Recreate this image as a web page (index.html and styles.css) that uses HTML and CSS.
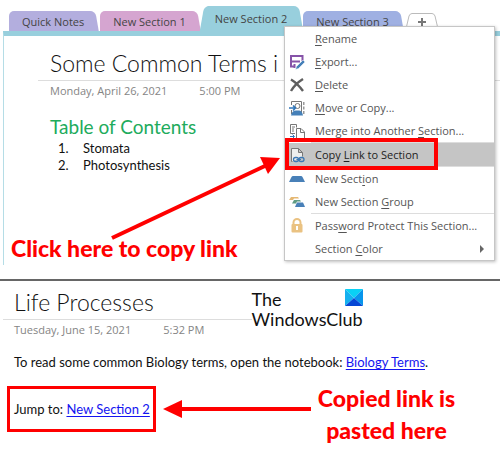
FILE: index.html
```html
<!DOCTYPE html>
<html lang="en">
<head>
    <meta charset="UTF-8">
    <meta name="viewport" content="width=device-width, initial-scale=1.0">
    <title>Copy Link to Section</title>
    <link rel="stylesheet" href="styles.css">
</head>
<body>

<section class="notebook">
    <nav class="tabs">
        <button class="tab purple">Quick Notes</button>
        <button class="tab pink">New Section 1</button>
        <button class="tab active">New Section 2</button>
        <button class="tab blue">New Section 3</button>
        <button class="add" aria-label="Add section">
            <svg width="34" height="18" viewBox="0 0 34 18">
                <path d="M.5 18L4 3Q5 .5 7 .5h20q2 0 3 2.500L33.500 18" fill="#fff" stroke="#bbb"/>
                <path d="M17 5v8M13 9h8" stroke="#777" stroke-width="2"/>
            </svg>
        </button>
    </nav>

    <article class="page">
        <h1 class="page-title">Some Common Terms i</h1>
        <p class="date"><span>Monday, April 26, 2021</span><span>5:00 PM</span></p>
        <h2 class="toc-title">Table of Contents</h2>
        <ol class="toc">
            <li>Stomata</li>
            <li>Photosynthesis</li>
        </ol>
        <p class="note click-note">Click here to copy link</p>
    </article>

    <svg class="arrow-up" width="170" height="84" viewBox="0 0 170 84">
        <path d="M1 81L156 8" stroke="#f00" stroke-width="4"/>
        <path d="M169 1L149 0L157 17Z" fill="#f00"/>
    </svg>

    <div class="menu">
        <button class="item"><span class="icon"></span><span><u>R</u>ename</span></button>
        <button class="item">
            <svg class="icon" viewBox="0 0 16 16">
                <path d="M2 2h11.500v5M2 1v11.500h4M2 7.500h9M5.500 10v4" fill="none" stroke="#8653a8" stroke-width="2"/>
                <path d="M14 6l2 2-6.500 6.500-3 1 1-3z" fill="#4580b8" stroke="#fff" stroke-width=".5"/>
            </svg>
            <span><u>E</u>xport...</span>
        </button>
        <button class="item">
            <svg class="icon" viewBox="0 0 16 16"><path d="M2 2.500Q8 6 14 14M14 2Q6 7 2 14" fill="none" stroke="#5f5f5f" stroke-width="2.400"/></svg>
            <span><u>D</u>elete</span>
        </button>
        <button class="item">
            <svg class="icon" viewBox="0 0 16 16">
                <path d="M2.500 5V1.500h10v13M2.500 10v4" fill="none" stroke="#777"/>
                <path d="M14 2h1.500v3H14zM14 6.500h1.500v3H14zM14 11h1.500v3H14z" fill="#999"/>
                <circle cx="8.500" cy="6" r="2.500" fill="#fff" stroke="#777"/>
                <path d="M2 15.500q1-5 5-5h3q3 0 4 5z" fill="#4580b8"/>
                <path d="M0 8h6M4 5.500L6.500 8L4 10.500" fill="none" stroke="#2f76ba" stroke-width="1.500"/>
            </svg>
            <span><u>M</u>ove or Copy...</span>
        </button>
        <button class="item">
            <svg class="icon" viewBox="0 0 16 16">
                <path d="M6 10.500H1.500v-9h6v3M3 4h3M3 6h2M3 8h2" fill="none" stroke="#777"/>
                <path d="M7.500 5.500h4.500l3.500 3.500v6.500h-8zM11.500 5.500v4h4" fill="#fff" stroke="#777"/>
                <path d="M1 13.500h4M3.500 11.500l2 2-2 2" fill="none" stroke="#2f76ba"/>
            </svg>
            <span>Merge into Another <u>S</u>ection...</span>
        </button>
        <hr>
        <button class="item selected">
            <svg class="icon" viewBox="0 0 16 16">
                <path d="M3.500 14.500h-1v-13h7l4 4v4M9.500 1.500v4h4" fill="#eee" stroke="#777"/>
                <rect x="4.500" y="10.500" width="5" height="4" rx="2" fill="none" stroke="#3c78b4" stroke-width="1.300"/>
                <rect x="10" y="10.500" width="5" height="4" rx="2" fill="none" stroke="#3c78b4" stroke-width="1.300"/>
                <path d="M7.500 12.500h4.500" stroke="#3c78b4"/>
            </svg>
            <span>Copy <u>L</u>ink to Section</span>
        </button>
        <hr>
        <button class="item">
            <svg class="icon" viewBox="0 0 16 16"><path d="M0 11l2.500-5q.5-1 1.500-1h8q1 0 1.500 1L16 11z" fill="#4880b8"/></svg>
            <span>New Sect<u>i</u>on</span>
        </button>
        <button class="item">
            <svg class="icon" viewBox="0 0 16 16">
                <path d="M0 6l2-3h7l1 1.500H5L4 6z" fill="#e5b873"/>
                <path d="M3 9.500l2-3.500h6l1 1.500H8l-1 2z" fill="#5f9c83"/>
                <path d="M6 13l2-4.500h6L16 13z" fill="#4880b8"/>
            </svg>
            <span>New Section <u>G</u>roup</span>
        </button>
        <hr>
        <button class="item">
            <svg class="icon" viewBox="0 0 16 16">
                <path d="M4.500 7V4.500a3.500 3.500 0 0 1 7 0V7" fill="none" stroke="#eac282" stroke-width="2"/>
                <rect x="2.500" y="6" width="11" height="8.500" rx="1" fill="#eac282"/>
                <path d="M8 8v4" stroke="#fff" stroke-width="2"/>
            </svg>
            <span>Pass<u>w</u>ord Protect This Section...</span>
        </button>
        <button class="item">
            <span class="icon"></span><span>Section <u>C</u>olor</span>
            <svg class="more" width="4" height="8" viewBox="0 0 4 8"><path d="M0 0l4 4-4 4z" fill="#666"/></svg>
        </button>
    </div>
</section>

<section class="result">
    <header class="result-head">
        <h1 class="page-title">Life Processes</h1>
        <p class="date"><span>Tuesday, June 15, 2021</span><span>5:32 PM</span></p>
        <div class="logo">
            <span>The</span>
            <svg width="18" height="17" viewBox="0 0 18 17">
                <path d="M0 0h18L9 9z" fill="#09d1f5"/>
                <path d="M0 0l9 9-9 8z" fill="#15b0ef"/>
                <path d="M18 0v17L9 9z" fill="#0795ec"/>
                <path d="M0 17l9-8 9 8z" fill="#0647d5"/>
            </svg>
            <span>WindowsClub</span>
        </div>
    </header>
    <p class="text">To read some common Biology terms, open the notebook: <a href="#">Biology Terms</a>.</p>
    <div class="jump-row">
        <p class="jump">Jump to: <a href="#">New Section 2</a></p>
        <svg class="arrow-left" width="148" height="20" viewBox="0 0 148 20">
            <path d="M16 10h132" stroke="#f00" stroke-width="4"/>
            <path d="M0 10L19 1v18z" fill="#f00"/>
        </svg>
        <p class="note">Copied link is<br>pasted here</p>
    </div>
</section>

</body>
</html>
```

FILE: styles.css
```css
* {
    box-sizing: border-box;
}

body {
    margin: 0;
    background: #fff;
    color: #111;
    font-family: Lato, Carlito, sans-serif;
    font-size: 13px;
}

h1, h2, p, ol {
    margin: 0;
}

button {
    border: 0;
    padding: 0;
    background: none;
    font-family: "Open Sans", "Noto Sans", sans-serif;
    font-size: 11px;
    color: #444;
}

a {
    color: #1414f0;
    text-underline-offset: 2px;
}

/* notebook with section tabs */
.notebook {
    position: relative;
    padding: 6px 0 0 3px;
}

.tabs {
    display: flex;
    align-items: flex-end;
    gap: 5px;
    height: 25px;
    padding-left: 6px;
}

.tab {
    position: relative;
    z-index: 0;
    height: 20px;
    padding: 0 11px 0 13px;
    white-space: nowrap;
}

.tab::before,
.tab::after {
    content: "";
    position: absolute;
    z-index: -1;
    top: 0;
    bottom: 0;
    background: var(--tab);
}

.tab::before {
    left: 0;
    right: 8px;
    border-radius: 5px 0 0 0;
}

.tab::after {
    left: 8px;
    right: -2px;
    border-radius: 0 5px 0 0;
    transform: skewX(10deg);
}

.purple { --tab: #b3aede; }
.pink { --tab: #d5a5d0; }
.blue { --tab: #9fb0e2; }

.active {
    --tab: #98cfdd;
    z-index: 1;
    height: 25px;
}

.active::before {
    transform: skewX(-10deg);
}

.add svg {
    display: block;
}

.page {
    min-height: 234px;
    padding: 11px 0 0 46px;
    border-top: 5px solid #98cfdd;
    border-left: 1px solid #b5dde6;
}

.page-title {
    padding-bottom: 1px;
    border-bottom: 1px solid #ddd;
    font-size: 23px;
    line-height: 32px;
    font-weight: 300;
}

.page .page-title {
    margin-left: -12px;
    padding-left: 12px;
}

.date {
    display: flex;
    gap: 32px;
    font-family: "Open Sans", "Noto Sans", sans-serif;
    font-size: 11px;
    line-height: 20px;
    color: #858585;
}

.toc-title {
    margin-top: 14px;
    font-size: 19px;
    line-height: 24px;
    font-weight: 400;
    color: #21ab5c;
}

.toc {
    margin-top: 1px;
    padding-left: 22px;
    line-height: 17px;
}

.toc li {
    padding-left: 11px;
}

.note {
    font-size: 23px;
    line-height: 32px;
    font-weight: 900;
    color: #f00;
}

.click-note {
    margin: 58px 0 0 -39px;
}

.arrow-up {
    position: absolute;
    left: 111px;
    top: 157px;
    z-index: 3;
}

/* context menu */
.menu {
    position: absolute;
    top: 26px;
    right: 5px;
    z-index: 2;
    width: 211px;
    border: 1px solid #c6c6c6;
    background: #fff;
    box-shadow: 1px 1px 3px rgba(0, 0, 0, .25);
}

.menu hr {
    margin: 0 0 0 26px;
    border: 0;
    border-top: 1px solid #ddd;
}

.item {
    position: relative;
    display: flex;
    align-items: center;
    gap: 10px;
    width: 100%;
    height: 23px;
    padding: 0 10px 0 4px;
    color: #555;
    white-space: nowrap;
}

.item u {
    text-underline-offset: 2px;
}

.icon {
    width: 16px;
    height: 16px;
    flex: none;
}

.more {
    margin-left: auto;
}

.selected {
    background: #c5c5c5;
    color: #222;
}

.selected::after {
    content: "";
    position: absolute;
    inset: -5px 56px -4px 0;
    border: 4px solid #f00;
}

/* page with the pasted link */
.result {
    margin-top: 14px;
    border-top: 2px solid #666;
}

.result-head {
    position: relative;
    margin-left: 3px;
}

.result-head .page-title {
    width: 50%;
    padding-top: 5px;
    padding-left: 11px;
}

.result-head .date {
    padding-left: 11px;
}

.logo {
    position: absolute;
    left: 50%;
    top: 8px;
    display: grid;
    grid-template-columns: 1fr auto;
    font-size: 18px;
    line-height: 20px;
}

.logo span:last-child {
    grid-column: 1 / 3;
}

.text {
    margin: 12px 14px 0;
    line-height: 20px;
}

.jump-row {
    display: flex;
    align-items: center;
    gap: 7px;
    padding: 0 0 28px 7px;
}

.jump {
    padding: 10px 3px 10px 4px;
    border: 3px solid #f00;
    line-height: 20px;
    white-space: nowrap;
}

.jump-row .note {
    margin-top: 10px;
    text-align: center;
    white-space: nowrap;
}
```
